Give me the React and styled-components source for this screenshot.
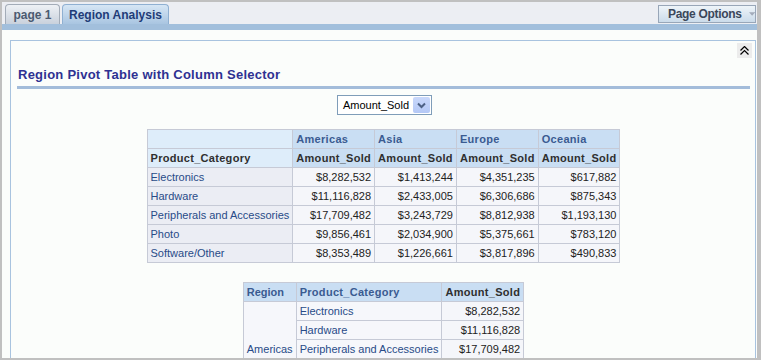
import React from "react";
import styled, { createGlobalStyle } from "styled-components";

const Global = createGlobalStyle`
  html, body { margin: 0; padding: 0; background: #fff; }
  body { font-family: "Liberation Sans", Arial, sans-serif; }
  * { box-sizing: border-box; }
`;

const Frame = styled.div`
  width: 761px;
  height: 360px;
  overflow: hidden;
  border-top: 2px solid #c0c0c0;
  border-left: 2px solid #c0c0c0;
  border-bottom: 2px solid #c0c0c0;
  border-right: 4px solid #c0c0c0;
  background: #fbfdfb;
  display: flex;
  flex-direction: column;
`;

const TabBar = styled.div`
  height: 22px;
  flex: none;
  background: #eceef3;
  display: flex;
  align-items: flex-end;
  padding-left: 3px;
  gap: 2px;
`;

const Tab = styled.div`
  height: 20px;
  width: ${(p) => p.$w}px;
  display: flex;
  align-items: center;
  justify-content: center;
  white-space: nowrap;
  border: 1px solid ${(p) => (p.$active ? "#8fb0d2" : "#a3acb8")};
  border-bottom: none;
  border-radius: 4px 4px 0 0;
  background: ${(p) =>
    p.$active
      ? "linear-gradient(#d6e6f5, #a9c5e1)"
      : "linear-gradient(#eef1f5, #c9d1dc)"};
  color: ${(p) => (p.$active ? "#1f3c78" : "#4b5a70")};
  font-weight: bold;
  font-size: 12px;
`;

const Spacer = styled.div`
  flex: 1;
`;

const OptionsButton = styled.div`
  align-self: center;
  margin-top: 1px;
  height: 18px;
  width: 98px;
  margin-right: 1px;
  border: 1px solid #98a6b8;
  background: linear-gradient(#eef4f9, #cbdbea);
  color: #3b475a;
  font-weight: bold;
  font-size: 12px;
  letter-spacing: -0.3px;
  white-space: nowrap;
  display: flex;
  align-items: center;
  padding-left: 9px;
  gap: 7px;
`;

const Stripe = styled.div`
  height: 6px;
  flex: none;
  background: #a2bfdc;
`;

const Content = styled.div`
  flex: 1;
  padding: 10px 1px 0 8px;
  display: flex;
  min-height: 0;
`;

const Panel = styled.div`
  flex: 1;
  border: 1px solid #a8c3df;
  border-bottom: none;
  display: flex;
  flex-direction: column;
  padding: 0 3px 0 6px;
`;

const PanelTop = styled.div`
  display: flex;
  justify-content: flex-end;
  padding-top: 2px;
`;

const CollapseBtn = styled.div`
  width: 15px;
  height: 15px;
  background: #ececec;
  display: flex;
  align-items: center;
  justify-content: center;
`;

const Title = styled.div`
  margin-top: 9px;
  margin-right: 2px;
  padding: 0 0 3px 1px;
  border-bottom: 3px solid #a3bcda;
  color: #2e3192;
  font-weight: bold;
  font-size: 13px;
  letter-spacing: 0.25px;
  line-height: 16px;
`;

const SelectRow = styled.div`
  display: flex;
  justify-content: center;
  margin-top: 6px;
`;

const SelectBox = styled.div`
  width: 95px;
  height: 20px;
  border: 1px solid #7f9db9;
  background: #fff;
  display: flex;
  align-items: center;
  justify-content: space-between;
  padding: 0 1px 0 5px;
  font-size: 11px;
  color: #000;
`;

const SelectArrow = styled.div`
  width: 17px;
  height: 16px;
  background: linear-gradient(#c9d8fb, #b4c8f6);
  border-radius: 2px;
  display: flex;
  align-items: center;
  justify-content: center;
`;

const TableWrap = styled.div`
  display: flex;
  justify-content: center;
  margin-top: ${(p) => p.$gap}px;
  padding-right: 2px;
`;

const Table = styled.table`
  border-collapse: collapse;
  font-size: 11px;
  border: 1px solid #c6cad6;
`;

const Th = styled.th`
  border: 1px solid #c6cad6;
  background: ${(p) => (p.$light ? "#deedfa" : "#c9def3")};
  color: ${(p) => (p.$dark ? "#2f2f2f" : "#3a5b91")};
  font-weight: bold;
  text-align: left;
  padding: 3px;
  line-height: 12px;
  letter-spacing: ${(p) => (p.$tight ? 0 : 0.3)}px;
  white-space: nowrap;
  vertical-align: bottom;
`;

const RowHead = styled.td`
  border: 1px solid #c6cad6;
  background: ${(p) => (p.$plain ? "#f6f7fb" : "#ebedf4")};
  color: #284b88;
  padding: 3px;
  line-height: 12px;
  white-space: nowrap;
  vertical-align: ${(p) => (p.$middle ? "middle" : "top")};
`;

const Num = styled.td`
  border: 1px solid #c6cad6;
  background: #f5f6fa;
  color: #222;
  text-align: right;
  padding: 3px;
  line-height: 12px;
  white-space: nowrap;
`;

const Chevrons = () => (
  <svg width="11" height="9" viewBox="0 0 11 9">
    <path d="M1.5 4.5 L5.5 0.5 L9.5 4.5 M1.5 8.5 L5.5 4.5 L9.5 8.5" stroke="#000" strokeWidth="1.2" fill="none" />
  </svg>
);

const DownChevron = () => (
  <svg width="9" height="7" viewBox="0 0 9 7">
    <path d="M1 1.5 L4.5 5 L8 1.5" stroke="#4d6185" strokeWidth="2" fill="none" />
  </svg>
);

const Triangle = () => (
  <svg width="7" height="4" viewBox="0 0 7 4">
    <path d="M0 0 H7 L3.5 4 Z" fill="#a3abba" />
  </svg>
);

const regions = ["Americas", "Asia", "Europe", "Oceania"];
const pivot = [
  ["Electronics", "$8,282,532", "$1,413,244", "$4,351,235", "$617,882"],
  ["Hardware", "$11,116,828", "$2,433,005", "$6,306,686", "$875,343"],
  ["Peripherals and Accessories", "$17,709,482", "$3,243,729", "$8,812,938", "$1,193,130"],
  ["Photo", "$9,856,461", "$2,034,900", "$5,375,661", "$783,120"],
  ["Software/Other", "$8,353,489", "$1,226,661", "$3,817,896", "$490,833"],
];

export default function App() {
  return (
    <>
      <Global />
      <Frame>
        <TabBar>
          <Tab $w={55}>page 1</Tab>
          <Tab $w={107} $active>Region Analysis</Tab>
          <Spacer />
          <OptionsButton>
            Page Options <Triangle />
          </OptionsButton>
        </TabBar>
        <Stripe />
        <Content>
          <Panel>
            <PanelTop>
              <CollapseBtn>
                <Chevrons />
              </CollapseBtn>
            </PanelTop>
            <Title>Region Pivot Table with Column Selector</Title>
            <SelectRow>
              <SelectBox>
                Amount_Sold
                <SelectArrow>
                  <DownChevron />
                </SelectArrow>
              </SelectBox>
            </SelectRow>
            <TableWrap $gap={14}>
              <Table>
                <thead>
                  <tr>
                    <Th $light />
                    {regions.map((r) => (
                      <Th key={r}>{r}</Th>
                    ))}
                  </tr>
                  <tr>
                    <Th $light $dark>Product_Category</Th>
                    {regions.map((r) => (
                      <Th key={r} $dark>Amount_Sold</Th>
                    ))}
                  </tr>
                </thead>
                <tbody>
                  {pivot.map((row) => (
                    <tr key={row[0]}>
                      <RowHead>{row[0]}</RowHead>
                      {row.slice(1).map((v, i) => (
                        <Num key={i}>{v}</Num>
                      ))}
                    </tr>
                  ))}
                </tbody>
              </Table>
            </TableWrap>
            <TableWrap $gap={19}>
              <Table>
                <thead>
                  <tr>
                    <Th $tight>Region</Th>
                    <Th>Product_Category</Th>
                    <Th $dark>Amount_Sold</Th>
                  </tr>
                </thead>
                <tbody>
                  {pivot.map((row, i) => (
                    <tr key={row[0]}>
                      {i === 0 && (
                        <RowHead $plain $middle rowSpan={5}>
                          Americas
                        </RowHead>
                      )}
                      <RowHead $plain>{row[0]}</RowHead>
                      <Num>{row[1]}</Num>
                    </tr>
                  ))}
                </tbody>
              </Table>
            </TableWrap>
          </Panel>
        </Content>
      </Frame>
    </>
  );
}
